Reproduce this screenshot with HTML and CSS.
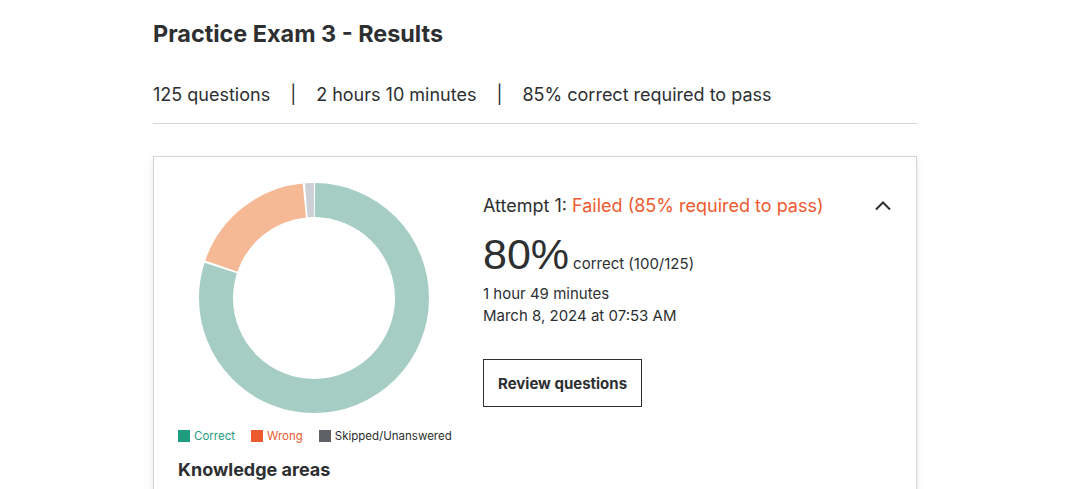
FILE: index.html
```html
<!DOCTYPE html>
<html lang="en">
<head>
<meta charset="utf-8">
<title>Practice Exam 3 - Results</title>
<link rel="stylesheet" href="styles.css">
</head>
<body>
<main class="page">
  <h1 class="title">Practice Exam 3 - Results</h1>
  <div class="stats">
    <span>125 questions</span>
    <span class="sep">|</span>
    <span>2 hours 10 minutes</span>
    <span class="sep">|</span>
    <span>85% correct required to pass</span>
  </div>
  <section class="card">
    <div class="attempt">
      <div class="chart-col">
        <svg class="donut" width="232" height="232" viewBox="0 0 232 232">
          <g transform="rotate(-90 116 116)">
            <circle cx="116" cy="116" r="98" fill="none" stroke="#a6cdc3" stroke-width="34"
              stroke-dasharray="490.6 125.2" stroke-dashoffset="-1"></circle>
            <circle cx="116" cy="116" r="98" fill="none" stroke="#f6b995" stroke-width="34"
              stroke-dasharray="111.3 504.5" stroke-dashoffset="-493.6"></circle>
            <circle cx="116" cy="116" r="98" fill="none" stroke="#cdd0d6" stroke-width="34"
              stroke-dasharray="7.8 608" stroke-dashoffset="-606.9"></circle>
          </g>
        </svg>
        <ul class="legend">
          <li class="lg lg-correct"><span class="sw"></span>Correct</li>
          <li class="lg lg-wrong"><span class="sw"></span>Wrong</li>
          <li class="lg lg-skip"><span class="sw"></span>Skipped/Unanswered</li>
        </ul>
      </div>
      <div class="info">
        <div class="head">
          <div class="status">Attempt 1: <span class="failed">Failed (85% required to pass)</span></div>
          <svg class="chev" width="18" height="18" viewBox="0 0 18 18"><path d="M2 12.5 L9 5.5 L16 12.5" fill="none" stroke="#2d2f31" stroke-width="2"/></svg>
        </div>
        <div class="score"><span class="pct">80%</span><span class="of">correct (100/125)</span></div>
        <div class="meta">1 hour 49 minutes</div>
        <div class="meta">March 8, 2024 at 07:53 AM</div>
        <button class="review">Review questions</button>
      </div>
    </div>
    <h2 class="ka">Knowledge areas</h2>
  </section>
</main>
</body>
</html>
```
FILE: styles.css
```css
* { box-sizing: border-box; }
body {
  margin: 0;
  background: #fff;
  color: #2d2f31;
  font-family: Inter, "Liberation Sans", Arial, sans-serif;
}
.page {
  width: 764px;
  margin-left: 153px;
  padding-top: 20px;
}
.title {
  margin: 0;
  font-size: 23.4px;
  line-height: 28px;
  font-weight: 700;
}
.stats {
  margin-top: 35px;
  font-size: 18px;
  line-height: 24px;
  padding-bottom: 16px;
  border-bottom: 1px solid #d1d7dc;
  display: flex;
}
.sep { margin: 0 20px; }
.card {
  margin-top: 32px;
  border: 1px solid #d1d7dc;
  box-shadow: 0 2px 4px rgba(0,0,0,0.08), 0 4px 12px rgba(0,0,0,0.05);
  padding: 25px 24px 0;
  height: 360px;
}
.attempt {
  display: flex;
  gap: 33px;
}
.chart-col {
  width: 272px;
  display: flex;
  flex-direction: column;
  align-items: center;
}
.donut { display: block; }
.legend {
  list-style: none;
  margin: 14px 0 0;
  padding: 0;
  display: flex;
  gap: 16px;
  font-size: 11.5px;
  line-height: 16px;
  width: 272px;
}
.lg { display: flex; align-items: center; white-space: nowrap; }
.sw { width: 12px; height: 12px; margin-right: 4px; display: inline-block; }
.lg-correct { color: #1e9c7f; }
.lg-correct .sw { background: #1e9c7f; }
.lg-wrong { color: #ee5a2f; }
.lg-wrong .sw { background: #ee5a2f; }
.lg-skip { color: #2d2f31; }
.lg-skip .sw { background: #5f6166; }
.info {
  flex: 1;
  padding-top: 12px;
}
.head {
  display: flex;
  justify-content: space-between;
  align-items: center;
}
.status { font-size: 18px; line-height: 24px; }
.failed { color: #ee5a2f; }
.score {
  margin-top: 10px;
  margin-bottom: 3px;
  display: flex;
  align-items: baseline;
  gap: 4px;
}
.pct {
  font-family: "Liberation Sans", Arial, sans-serif;
  font-size: 43px;
  line-height: 52px;
}
.of { font-size: 15px; }
.meta { font-size: 15px; line-height: 22px; }
.review {
  margin-top: 32px;
  display: block;
  background: #fff;
  border: 1px solid #2d2f31;
  color: #2d2f31;
  font-family: inherit;
  font-weight: 700;
  font-size: 15px;
  height: 48px;
  padding: 0 14px;
}
.ka {
  margin: 14px 0 0;
  font-size: 18px;
  font-weight: 700;
  line-height: 24px;
}
```
